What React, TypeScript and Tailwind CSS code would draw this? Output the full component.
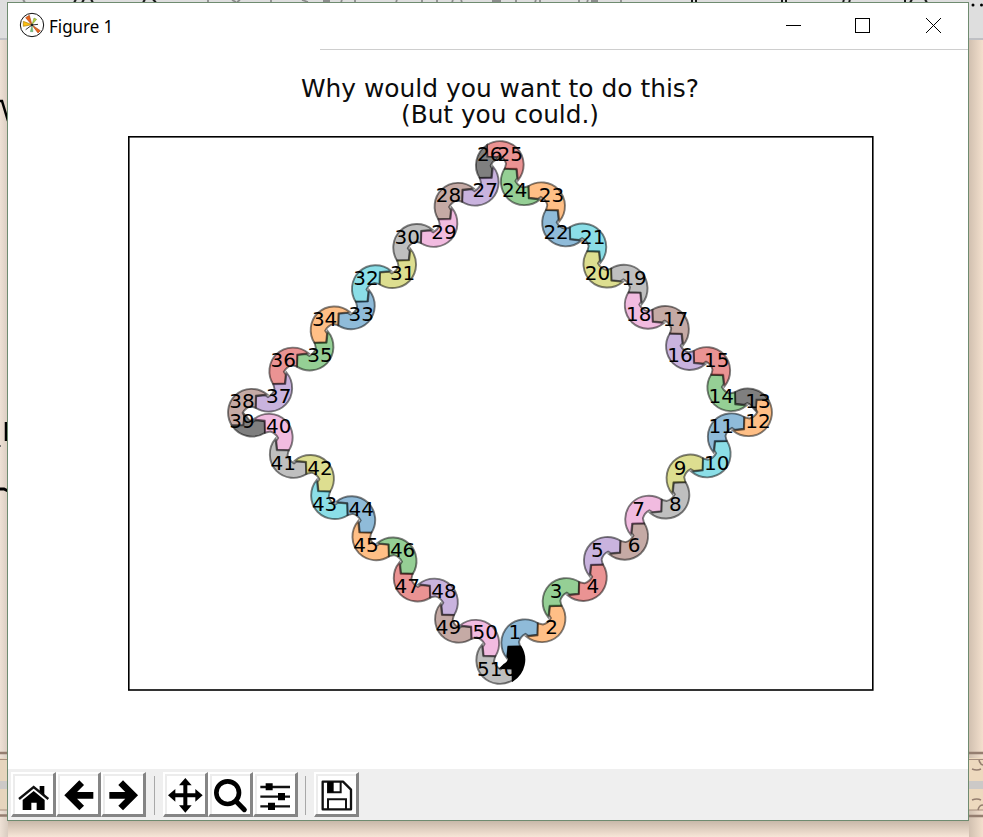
import React from 'react';

const TAB10 = ['#1f77b4', '#ff7f0e', '#2ca02c', '#d62728', '#9467bd', '#8c564b', '#e377c2', '#7f7f7f', '#bcbd22', '#17becf'];

const FULL =
  'M-15,-18 A24.2,24.2 0 0 1 17.1,-17.1 A24.2,24.2 0 0 1 20.3,13 L8.7,12.7 L7.8,3.4 L9.6,0.5 Q7,-4.6 1.6,-6 L-3.6,-4.8 L-4,-16.8 Z';
const CORNER =
  'M13,-20.3 A24.2,24.2 0 0 1 20.3,13 L8.7,12.7 L7.8,3.4 L9.4,0.5 Q7.500,-4 4.5,-5.2 L1.5,-8 L12.7,-8.7 Z';

const SIGNS = [
  [1, -1],
  [-1, -1],
  [-1, 1],
  [1, 1],
];

interface Piece {
  i: number;
  x: number;
  y: number;
  sx: number;
  sy: number;
  odd: boolean;
}

function buildLoop(): Piece[] {
  const out: Piece[] = [];
  let x = 500;
  let y = 659.7;
  for (let i = 0; i < 52; i++) {
    const [sx, sy] = SIGNS[Math.floor(i / 13)];
    const odd = i % 2 === 1;
    out.push({ i, x, y, sx, sy, odd });
    if (i % 13 !== 12) {
      x += sx * (odd ? 16.3 : 25);
      y += sy * (odd ? 25 : 16.2);
    }
  }
  return out;
}

const loop = buildLoop();

// The black piece closes the loop, so it is painted last, above piece 51.
const paintOrder = [...loop.slice(1), loop[0]];

function Figure() {
  return (
    <svg className="block h-[719px] w-[960px]" viewBox="8 50 960 719" fontFamily="'DejaVu Sans', sans-serif">
      <g fill="#0c0c0c" textAnchor="middle" fontSize="24.500">
        <text x="500" y="97" textLength="398" lengthAdjust="spacingAndGlyphs">Why would you want to do this?</text>
        <text x="500" y="122.500" textLength="198" lengthAdjust="spacingAndGlyphs">(But you could.)</text>
      </g>
      <rect x="128.800" y="136.800" width="744" height="553.200" fill="none" stroke="#000" strokeWidth="1.600" />
      {paintOrder.map((p) => {
        const corner = p.i % 13 === 0;
        const color = p.i === 0 ? '#000' : corner ? '#7f7f7f' : TAB10[(p.i - Math.floor(p.i / 13) - 1) % 10];
        const m = p.odd ? `0 ${p.sy} ${p.sx} 0` : `${p.sx} 0 0 ${p.sy}`;
        return (
          <path
            key={p.i}
            d={corner ? CORNER : FULL}
            transform={`matrix(${m} ${p.x} ${p.y})`}
            fill={color}
            fillOpacity={corner ? 1 : 0.5}
            stroke="#000"
            strokeOpacity={p.i === 0 ? 1 : 0.5}
            strokeWidth={p.i === 0 ? 2.4 : 1.9}
          />
        );
      })}
      {loop.map((p) => {
        const k = p.odd ? -1 : 1;
        return (
          <text key={p.i} x={p.x + k * p.sx * 10.2} y={p.y - k * p.sy * 10 + 5.8} fontSize="20" textAnchor="middle" textLength={p.i < 10 ? 12.7 : 25.4} lengthAdjust="spacingAndGlyphs">
            {p.i}
          </text>
        );
      })}
    </svg>
  );
}

function ToolButton({ x, children }: { x: number; children: React.ReactNode }) {
  return (
    <button className="h-[45px] w-[45px] shrink-0 border-t-2 border-r-[3px] border-b-[3px] border-l-2 border-t-white border-r-[#858585] border-b-[#858585] border-l-white bg-white shadow-[inset_1px_1px_0_1px_#ececec]">
      <svg className="-mt-[2px] -ml-[2px] block h-[45px] w-[45px] max-w-none" viewBox={`${x} 96 135 135`}>
        {children}
      </svg>
    </button>
  );
}

function Toolbar() {
  return (
    <div className="flex h-[51px] bg-[#efefef] pt-[3px] pl-[3px]">
      <ToolButton x={33}>
        <path d="M68 180 L101 153 L134 180 V210 H110 V188 H94 V210 H68 Z" fill="#000" />
        <path d="M57 177 L101 141 L145 177" fill="none" stroke="#111" strokeWidth="7" />
        <path d="M119 138 H133 V166 L119 154 Z" fill="#000" />
      </ToolButton>
      <ToolButton x={168}>
        <path d="M245 128 L207 166 L245 204 M210 166 H280" fill="none" stroke="#000" strokeWidth="20" />
      </ToolButton>
      <ToolButton x={303}>
        <path d="M362 128 L400 166 L362 204 M397 166 H328" fill="none" stroke="#000" strokeWidth="20" />
      </ToolButton>
      <div className="mt-[4px] mr-[8px] ml-[8px] h-[39px] w-px bg-[#a8a8a8]" />
      <ToolButton x={489}>
        <path d="M556 124 V208 M514 166 H598" stroke="#000" strokeWidth="12" />
        <path d="M556 114 L575 136 H537 Z M556 218 L575 196 H537 Z M504 166 L526 147 V185 Z M608 166 L586 147 V185 Z" fill="#000" />
      </ToolButton>
      <ToolButton x={624}>
        <circle cx="683" cy="158" r="34" fill="none" stroke="#000" strokeWidth="14" />
        <path d="M708 184 L733 209" stroke="#000" strokeWidth="15" strokeLinecap="round" />
      </ToolButton>
      <ToolButton x={759}>
        <path d="M781 141 H870 M781 170 H870 M781 199 H870" stroke="#111" strokeWidth="7" />
        <path d="M797 130 H818 V151 H797 Z M834 159 H855 V181 H834 Z M804 188 H825 V210 H804 Z" fill="#000" />
      </ToolButton>
      <div className="mt-[4px] mr-[8px] ml-[7px] h-[39px] w-px bg-[#a8a8a8]" />
      <ToolButton x={942}>
        <path d="M968 125 H1029 L1053 149 V208 H968 Z" fill="none" stroke="#111" strokeWidth="7" strokeLinejoin="round" />
        <path d="M984 126 V157 H1022 V126 M984 207 V178 H1038 V207" fill="none" stroke="#111" strokeWidth="6" />
        <path d="M984 126 H1001 V157 H984 Z" fill="#000" />
      </ToolButton>
    </div>
  );
}

function TitleBar() {
  return (
    <div className="flex h-[47px] items-start">
      <svg className="mt-[9px] ml-[11px] h-[26px] w-[26px]" viewBox="0 0 78 78">
        <circle cx="39" cy="39" r="35" fill="#fff" stroke="#111" strokeWidth="3" />
        <path d="M39 39 L20 17 L31 10 Z" fill="#e8641b" stroke="#a9481a" strokeWidth="2" />
        <path d="M39 38 L13 28 V43 Z" fill="#fdbf0f" stroke="#a87c10" strokeWidth="2" />
        <path d="M39 39 L64 56 L57 63 Z" fill="#e8641b" stroke="#a9481a" strokeWidth="2" />
        <path d="M39 38 L45 18 L53 22 Z" fill="#b5d334" stroke="#708b30" strokeWidth="1.500" />
        <path d="M39 39 L34 59 H42 Z" fill="#6fc07b" stroke="#4a7d50" strokeWidth="1" />
        <path d="M39 39 L20 53 M39 39 L57 37" stroke="#333" strokeWidth="3" />
        <circle cx="39" cy="39" r="4" fill="#222" />
      </svg>
      <span className="mt-[11px] ml-[4px] origin-left scale-x-[0.94] font-['Noto_Sans',sans-serif] text-[18px] leading-[24px] whitespace-nowrap text-black">Figure 1</span>
      <svg className="mt-[14px] mr-[26px] ml-auto h-[17px] w-[157px]" viewBox="785 17 157 17" fill="none" stroke="#000">
        <path d="M786 25.500 H801" />
        <rect x="855.500" y="18.500" width="14" height="14" />
        <path d="M926 18 L941 33 M941 18 L926 33" />
      </svg>
    </div>
  );
}

function Backdrop() {
  return (
    <svg className="block h-[837px] w-[983px]" viewBox="0 0 983 837">
      <defs>
        <linearGradient id="left" x1="0" x2="1" y1="0" y2="0">
          <stop offset="0" stopColor="#eee1d5" />
          <stop offset="1" stopColor="#d9ccc0" />
        </linearGradient>
        <linearGradient id="right" x1="0" x2="1" y1="0" y2="0">
          <stop offset="0" stopColor="#d1c0b0" />
          <stop offset="1" stopColor="#f3e0cd" />
        </linearGradient>
        <linearGradient id="bottom" x1="0" x2="0" y1="0" y2="1">
          <stop offset="0" stopColor="#c8b8a9" />
          <stop offset="1" stopColor="#f7e6d7" />
        </linearGradient>
      </defs>
      <rect width="983" height="837" fill="#f5e4d5" />
      <rect width="983" height="40" fill="#dedede" />
      <rect y="40" width="8" height="797" fill="url(#left)" />
      <rect x="969" y="40" width="14" height="797" fill="url(#right)" />
      <rect x="8" y="821" width="961" height="16" fill="url(#bottom)" />
      <path d="M0 39 H8 M969 39 H983" stroke="#bfc0c4" strokeWidth="2" />
      <path d="M23 0 l2 2 M208 0 V2 M232 0 l4 2 M240 0 l-3 2 M271 0 V2 M302 0 l6 2 M323 1 h7 M342 0 l-1 2 M355 0 V2 M397 0 l-1 2 M422 0 V2 M437 0 V2 M453 0 l-1 2 M461 0 l1 2 M492 1 h9 M516 0 V2 M536 0 l-1 2 M540 0 V2 M579 0 V2 M588 0 l-1 2 M591 1 h7 M621 0 V2" stroke="#8c8c8c" strokeWidth="1.800" />
      <path d="M76 0 l-2 2 M84 0 l-2 2 M91 0 l2 2 M145 0 l-2 2 M153 0 l3 2 M692 0 V2 M696 0 V2 M782 0 V2 M786 0 V2 M844 0 l-1 2 M850 0 l-1 2 M905 0 V2 M912 0 l-2 2 M925 0 l2 2" stroke="#161616" strokeWidth="2" />
      <circle cx="973" cy="5" r="1.500" />
      <circle cx="981.500" cy="5" r="1.500" />
      <path d="M0 101 H2 L8 121 M6 422 V441" fill="none" stroke="#000" strokeWidth="2.500" />
      <path d="M0 489 H4 L8 491" fill="none" stroke="#000" strokeWidth="3" />
      <path d="M0 446 h1" stroke="#777" strokeWidth="2" />
      <rect y="758" width="8" height="52" fill="#e6d5bd" />
      <rect x="969" y="758" width="14" height="52" fill="#edd9be" />
      <path d="M0 753 H8 M0 815.500 H8 M969 753 H983 M969 816 H983" stroke="#957e70" strokeWidth="2.500" />
      <path d="M0 759.500 H8 M0 810 H8 M969 759.500 H983 M969 810 H983" stroke="#a58e7e" />
      <path d="M0 785 H8 M969 785 H983" stroke="#ccc9c7" strokeWidth="8" />
      <path d="M972 769 q5 2 9 0 M972 800 q5 -2 9 0 M979 760 q1 5 5 5 M983 805 q-4 0 -5 5" fill="none" stroke="#957e70" strokeWidth="1.500" />
    </svg>
  );
}

export default function App() {
  return (
    <div className="relative h-[837px] w-[983px] overflow-hidden">
      <Backdrop />
      <div className="absolute top-[2px] left-[7px] flex h-[819px] w-[962px] flex-col border border-[#6f8b70] bg-white">
        <TitleBar />
        <div className="-mt-px ml-[312px] h-px shrink-0 bg-[#cecece]" />
        <Figure />
        <Toolbar />
      </div>
    </div>
  );
}
